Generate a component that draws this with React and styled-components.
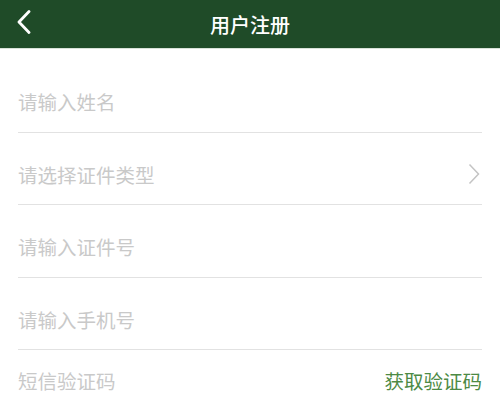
import React from "react";
import styled, { createGlobalStyle } from "styled-components";

const GlobalStyle = createGlobalStyle`
  html, body {
    margin: 0;
    padding: 0;
    background: #ffffff;
    font-family: "Noto Sans CJK SC", "Noto Sans", sans-serif;
  }
`;

const Page = styled.div`
  width: 500px;
  height: 401px;
  overflow: hidden;
  background: #ffffff;
`;

const Header = styled.header`
  position: relative;
  height: 48px;
  background: #1f4b28;
  border-bottom: 1px solid #d8e2d9;
  display: flex;
  align-items: center;
  justify-content: center;
`;

const BackButton = styled.button`
  position: absolute;
  left: 12px;
  top: 8px;
  width: 24px;
  height: 28px;
  padding: 0;
  border: none;
  background: none;
  display: flex;
  align-items: center;
  justify-content: center;
`;

const Title = styled.h1`
  margin: 0;
  font-size: 20px;
  font-weight: 500;
  color: #ffffff;
`;

const Form = styled.div`
  padding: 11px 18px 0 18px;
`;

const Row = styled.div`
  height: ${(p) => (p.$tight ? "62px" : "72.5px")};
  display: flex;
  align-items: center;
  justify-content: space-between;
  padding-top: ${(p) => (p.$tight ? "0" : "12px")};
  box-sizing: border-box;
  border-bottom: 1px solid #e2e2e2;
`;

const Placeholder = styled.span`
  font-size: 19.5px;
  color: #c9c9c9;
`;

const Action = styled.span`
  font-size: 19.5px;
  color: #4d8a45;
`;

const Chevron = () => (
  <svg width="12" height="22" viewBox="0 0 12 22" style={{ marginRight: 2 }}>
    <path d="M1.5 1.5 L10.5 11 L1.5 20.5" fill="none" stroke="#c4c4c4" strokeWidth="1.5" />
  </svg>
);

const rows = [
  { label: "请输入姓名" },
  { label: "请选择证件类型", chevron: true },
  { label: "请输入证件号" },
  { label: "请输入手机号" },
  { label: "短信验证码", action: "获取验证码", tight: true },
];

export default function App() {
  return (
    <Page>
      <GlobalStyle />
      <Header>
        <BackButton>
          <svg width="16" height="24" viewBox="0 0 16 24">
            <path d="M13 1.5 L3 12 L13 22.5" fill="none" stroke="#ffffff" strokeWidth="2.8" strokeLinecap="round" strokeLinejoin="round" />
          </svg>
        </BackButton>
        <Title>用户注册</Title>
      </Header>
      <Form>
        {rows.map((r) => (
          <Row key={r.label} $tight={r.tight}>
            <Placeholder>{r.label}</Placeholder>
            {r.chevron && <Chevron />}
            {r.action && <Action>{r.action}</Action>}
          </Row>
        ))}
      </Form>
    </Page>
  );
}
